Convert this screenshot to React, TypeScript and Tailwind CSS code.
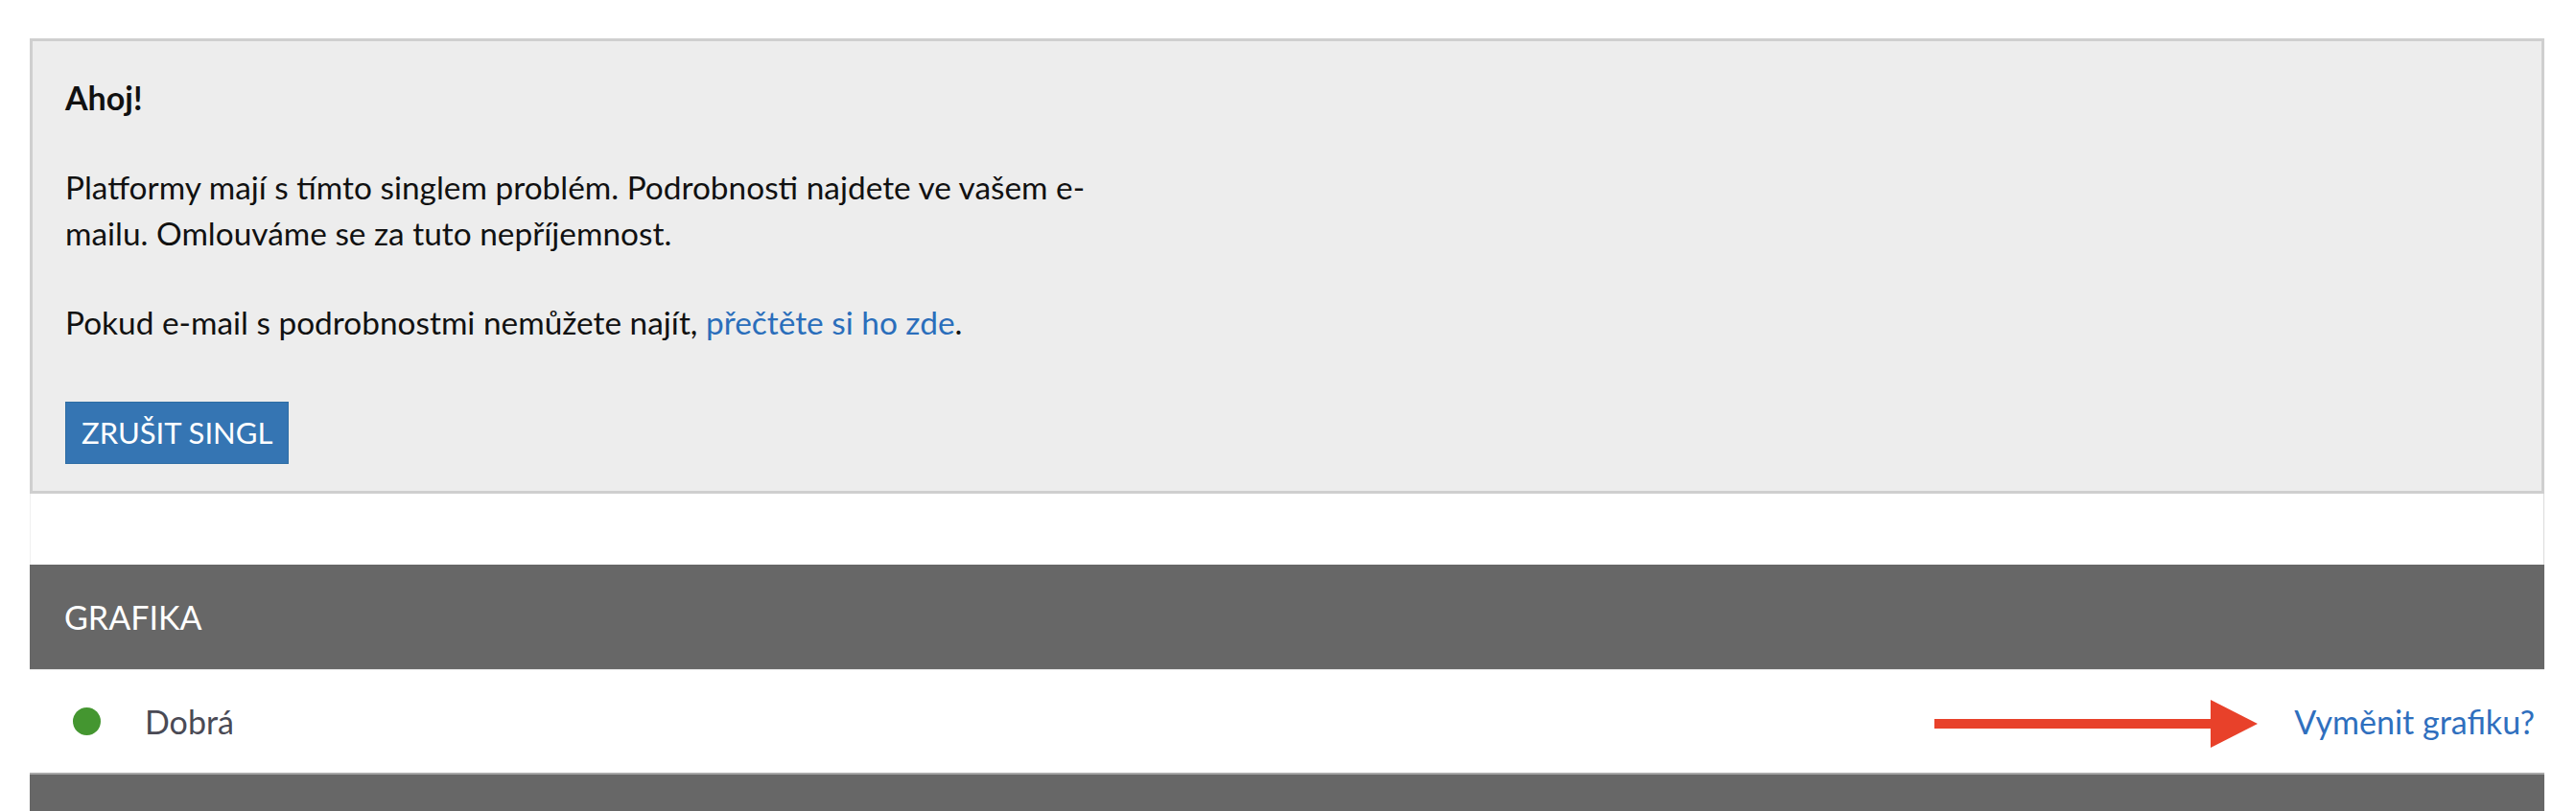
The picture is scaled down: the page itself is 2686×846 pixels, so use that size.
export default function App() {
  return (
    <div className="min-h-screen bg-white pt-[40px] font-['Lato',sans-serif]">
      <div className="ml-[31px] w-[2622px]">
        {/* notice box */}
        <div className="border-[3px] border-[#cfcfcf] bg-[#ededed] pt-[35px] pb-[28px] pl-[34px] pr-[34px] text-[#111]">
          <p className="text-[34px] font-bold leading-[48px]">Ahoj!</p>
          <p className="mt-[45px] w-[1100px] text-[33.4px] leading-[48px]">
            Platformy mají s tímto singlem problém. Podrobnosti najdete ve vašem e-mailu. Omlouváme se za tuto nepříjemnost.
          </p>
          <p className="mt-[45px] text-[33.4px] leading-[48px]">
            Pokud e-mail s podrobnostmi nemůžete najít,{" "}
            <a href="#" className="text-[#2a6ebb]">
              přečtěte si ho zde
            </a>
            .
          </p>
          <button className="mt-[59px] h-[65px] border border-[#2e6da4] bg-[#3575b3] px-[16px] text-[31px] uppercase text-white">
            Zrušit singl
          </button>
        </div>

        <div className="h-[74px] border-l border-r border-l-[#f0f0f0] border-r-[#dcdcdc]" />

        {/* section */}
        <div className="flex h-[109px] items-center bg-[#676767] px-[36px] text-[34px] text-white">
          GRAFIKA
        </div>
        <div className="flex h-[110px] items-center justify-between border-t border-b-2 border-t-[#e4e4e4] border-b-[#a8a8a8] pl-[45px] pr-[10px]">
          <div className="flex items-center gap-[46px]">
            <span className="h-[29px] w-[29px] rounded-full bg-[#449630]" />
            <span className="text-[34px] text-[#4a4a55]">Dobrá</span>
          </div>
          <div className="flex items-center gap-[38px]">
            <svg width="337" height="50" viewBox="0 0 337 50" className="mt-[4px]">
              <rect x="0" y="20" width="290" height="10" fill="#e8412a" />
              <polygon points="288,0 337,25 288,50" fill="#e8412a" />
            </svg>
            <a href="#" className="text-[34px] text-[#2f6fbe]">
              Vyměnit grafiku?
            </a>
          </div>
        </div>
        <div className="h-[109px] bg-[#676767]" />
      </div>
    </div>
  );
}
